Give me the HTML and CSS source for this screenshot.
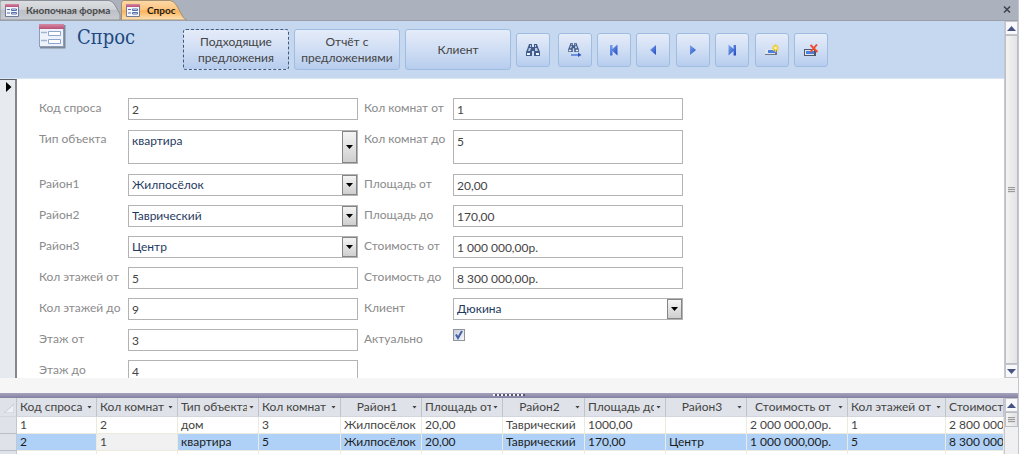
FILE: index.html
```html
<!DOCTYPE html>
<html lang="ru">
<head>
<meta charset="utf-8">
<title>Спрос</title>
<link rel="stylesheet" href="styles.css">
</head>
<body>
<svg class="defs" aria-hidden="true">
  <defs>
    <linearGradient id="blue" x1="0" y1="0" x2="1" y2="1"><stop offset="0" stop-color="#7fa8f0"/><stop offset="1" stop-color="#1f49c0"/></linearGradient>
    <linearGradient id="gray-tab" x1="0" y1="0" x2="0" y2="1"><stop offset="0" stop-color="#dcdee1"/><stop offset=".45" stop-color="#cfd2d6"/><stop offset=".5" stop-color="#bcc0c6"/><stop offset="1" stop-color="#c9ccd1"/></linearGradient>
    <linearGradient id="orange-tab" x1="0" y1="0" x2="0" y2="1"><stop offset="0" stop-color="#fbd9a8"/><stop offset=".45" stop-color="#fcc580"/><stop offset=".55" stop-color="#fbb45c"/><stop offset="1" stop-color="#fde3b8"/></linearGradient>
    <linearGradient id="rose" x1="0" y1="0" x2="0" y2="1"><stop offset="0" stop-color="#d58aa4"/><stop offset="1" stop-color="#b85077"/></linearGradient>
    <symbol id="form" viewBox="0 0 27 25">
      <path d="M1 1h25.5v23.5H1z" fill="#7f8898"/>
      <path d="M0 0h25v23H0z" fill="#8f9cb4"/>
      <path d="M1 5h23v17H1z" fill="#eef3fb"/>
      <path d="M0 0h25v5H0z" fill="url(#rose)"/>
      <path d="M2 8.500h6M2 16.500h6" stroke="#9fb3d4" stroke-width="1.500"/>
      <path d="M9.500 7.500h12v4h-12zM9.500 15.500h12v4h-12z" fill="#fff" stroke="#8ca6d0"/>
    </symbol>
    <symbol id="form-small" viewBox="0 0 14 13">
      <path d="M.5.500h13v12H.5z" fill="#f4f6fb" stroke="#6e7c9a"/>
      <path d="M0 0h14v3H0z" fill="url(#rose)"/>
      <path d="M2 5.500h3M2 9h3" stroke="#5471ac"/>
      <path d="M6.500 5h5v1.500h-5zM6.500 8.500h5V10h-5z" fill="#fff" stroke="#5471ac"/>
    </symbol>
    <symbol id="binoculars" viewBox="0 0 14 12">
      <path d="M3 0h3v3h2V0h3l1 3 2 5v4H8V7H6v5H0V8l2-5z" fill="#425c8a"/>
      <path d="M4 1h1v2H4zM9 1h1v2H9zM3 4h2L4 7H2zM9 4h2l1 3H9z" fill="#b9cbe8"/>
      <path d="M1 9h3v2H1zM10 9h3v2h-3z" fill="#eef3fa"/>
    </symbol>
  </defs>
</svg>

<div class="window">
  <nav class="tabs" aria-label="Открытые объекты">
    <button class="tab tab-first" type="button">
      <svg class="tab-shape" viewBox="0 0 121 20" preserveAspectRatio="none"><path d="M0 1.500Q1 .5 3 .5H108Q113 .5 116 7L120 14V20H0z" fill="url(#gray-tab)" stroke="#8b9098"/></svg>
      <svg class="tab-icon"><use href="#form-small"/></svg><span>Кнопочная форма</span>
    </button>
    <button class="tab tab-active" type="button">
      <svg class="tab-shape" viewBox="0 0 66 20" preserveAspectRatio="none"><path d="M.5 20V3Q.5.5 3 .5H49Q53 .5 56 6L62 17Q63 19 66 20z" fill="url(#orange-tab)" stroke="#a4906f"/></svg>
      <svg class="tab-icon"><use href="#form-small"/></svg><span>Спрос</span>
    </button>
    <button class="close" type="button" aria-label="Закрыть"><svg width="8" height="7" viewBox="0 0 8 7"><path d="M1 .5l6 6M7 .5l-6 6" stroke="#3f444c" stroke-width="1.500"/></svg></button>
  </nav>

  <main class="form-pane">
    <div class="form-view">
      <header class="form-header">
        <svg class="form-icon"><use href="#form"/></svg>
        <h1>Спрос</h1>
        <div class="commands">
          <button class="command focused" type="button">Подходящие<br>предложения</button>
          <button class="command" type="button">Отчёт с<br>предложениями</button>
          <button class="command" type="button">Клиент</button>
          <div class="find-group">
            <button class="icon-button" type="button" aria-label="Найти"><svg width="14" height="12"><use href="#binoculars"/></svg></button>
            <button class="icon-button" type="button" aria-label="Найти далее"><svg width="14" height="14" viewBox="0 0 14 14"><use href="#binoculars" width="11" height="9"/><path d="M3 12h8" stroke="#4f79d0" stroke-width="1.500"/><path d="M10 9.500l3.500 2.500-3.500 2z" fill="#2c56bd"/></svg></button>
          </div>
          <div class="nav-group">
            <button class="icon-button" type="button" aria-label="Первая запись"><svg width="10" height="12" viewBox="0 0 10 12"><path d="M1 1h2.500v4L8.500.500v11L3.500 7v4.500H1z" fill="url(#blue)"/></svg></button>
            <button class="icon-button" type="button" aria-label="Предыдущая запись"><svg width="8" height="12" viewBox="0 0 8 12"><path d="M7 1v10L1 6z" fill="url(#blue)"/></svg></button>
            <button class="icon-button" type="button" aria-label="Следующая запись"><svg width="8" height="12" viewBox="0 0 8 12"><path d="M1 1v10l6-5z" fill="url(#blue)"/></svg></button>
            <button class="icon-button" type="button" aria-label="Последняя запись"><svg width="10" height="12" viewBox="0 0 10 12"><path d="M9 1H6.500v4L1.500.500v11L6.500 7v4.500H9z" fill="url(#blue)"/></svg></button>
            <button class="icon-button" type="button" aria-label="Добавить запись"><svg width="16" height="12" viewBox="0 0 16 12"><path d="M1 5h12v6H1z" fill="#6d7787"/><path d="M1 5h10v5H1z" fill="#dfe5ee"/><path d="M4 6h8v3H4z" fill="#4c7ede"/><path d="M11.500 0v8M8 4h7M9 1.500l5 5M14 1.500l-5 5" stroke="#f2cf3d" stroke-width="1.500"/><path d="M10.500 3h2v2h-2z" fill="#fffbd0"/></svg></button>
            <button class="icon-button" type="button" aria-label="Удалить запись"><svg width="16" height="12" viewBox="0 0 16 12"><path d="M1 5h12v7H1z" fill="#4d5868"/><path d="M2 6h9v5H2z" fill="#dfe5ee"/><path d="M3 7h8v3H3z" fill="#4c7ede"/><path d="M7.500 1l7 7M14 .5L7.500 8" stroke="#f0492c" stroke-width="1.800"/></svg></button>
          </div>
        </div>
      </header>

      <div class="record">
        <button class="record-selector" type="button" aria-label="Текущая запись"><svg width="6" height="10" viewBox="0 0 6 10"><path d="M0 0l5.500 5L0 10z" fill="#000"/></svg></button>
        <form class="fields">
          <label for="code">Код спроса</label>
          <input id="code" class="box" type="text" value="2">
          <label for="rooms-from">Кол комнат от</label>
          <input id="rooms-from" class="box" type="text" value="1">

          <label for="type">Тип объекта</label>
          <div class="combo tall"><select id="type"><option>квартира</option></select><span class="drop"></span></div>
          <label for="rooms-to">Кол комнат до</label>
          <input id="rooms-to" class="box tall" type="text" value="5">

          <label for="area1">Район1</label>
          <div class="combo"><select id="area1"><option>Жилпосёлок</option></select><span class="drop"></span></div>
          <label for="size-from">Площадь от</label>
          <input id="size-from" class="box" type="text" value="20,00">

          <label for="area2">Район2</label>
          <div class="combo"><select id="area2"><option>Таврический</option></select><span class="drop"></span></div>
          <label for="size-to">Площадь до</label>
          <input id="size-to" class="box" type="text" value="170,00">

          <label for="area3">Район3</label>
          <div class="combo"><select id="area3"><option>Центр</option></select><span class="drop"></span></div>
          <label for="price-from">Стоимость от</label>
          <input id="price-from" class="box" type="text" value="1 000 000,00р.">

          <label for="floors-from">Кол этажей от</label>
          <input id="floors-from" class="box" type="text" value="5">
          <label for="price-to">Стоимость до</label>
          <input id="price-to" class="box" type="text" value="8 300 000,00р.">

          <label for="floors-to">Кол этажей до</label>
          <input id="floors-to" class="box" type="text" value="9">
          <label for="client">Клиент</label>
          <div class="combo"><select id="client"><option>Дюкина</option></select><span class="drop"></span></div>

          <label for="floor-from">Этаж от</label>
          <input id="floor-from" class="box" type="text" value="3">
          <label for="actual">Актуально</label>
          <div class="check"><input id="actual" type="checkbox" checked><svg viewBox="0 0 12 12"><path d="M3 5.500l2 3.500 4-7" fill="none" stroke="#4560a8" stroke-width="2"/></svg></div>

          <label for="floor-to">Этаж до</label>
          <input id="floor-to" class="box" type="text" value="4">
        </form>
      </div>
    </div>
    <div class="scrollbar">
      <button type="button" class="scroll-button" aria-label="Вверх"><svg width="9" height="5" viewBox="0 0 9 5"><path d="M0 5l4.500-5L9 5z" fill="#475383"/></svg></button>
      <div class="thumb"><span class="grip"></span></div>
      <button type="button" class="scroll-button" aria-label="Вниз"><svg width="9" height="5" viewBox="0 0 9 5"><path d="M0 0l4.500 5L9 0z" fill="#475383"/></svg></button>
    </div>
  </main>

  <div class="gap"></div>
  <div class="splitter"><span class="splitter-grip"></span></div>

  <section class="sheet-pane">
    <div class="sheet-view">
      <table class="sheet">
        <colgroup><col class="c-select"><col class="c-code"><col class="c-std"><col class="c-std"><col class="c-wide"><col class="c-std"><col class="c-std"><col class="c-wide"><col class="c-std"><col class="c-std"><col class="c-price"><col class="c-floors"><col></colgroup>
        <thead>
          <tr>
            <th class="corner"><svg width="10" height="9" viewBox="0 0 10 9"><path d="M10 0v9H0z" fill="#eef1f6" stroke="#c5cbd5"/></svg></th>
            <th><div class="head"><span>Код спроса</span><i></i></div></th>
            <th><div class="head"><span>Кол комнат</span><i></i></div></th>
            <th><div class="head"><span>Тип объекта</span><i></i></div></th>
            <th><div class="head"><span>Кол комнат</span><i></i></div></th>
            <th><div class="head middle"><span>Район1</span><i></i></div></th>
            <th><div class="head"><span>Площадь от</span><i></i></div></th>
            <th><div class="head middle"><span>Район2</span><i></i></div></th>
            <th><div class="head"><span>Площадь до</span><i></i></div></th>
            <th><div class="head middle"><span>Район3</span><i></i></div></th>
            <th><div class="head middle"><span>Стоимость от</span><i></i></div></th>
            <th><div class="head"><span>Кол этажей от</span><i></i></div></th>
            <th><div class="head last"><span>Стоимость до</span></div></th>
          </tr>
        </thead>
        <tbody>
          <tr><th></th><td>1</td><td>2</td><td>дом</td><td>3</td><td>Жилпосёлок</td><td>20,00</td><td>Таврический</td><td>1000,00</td><td></td><td>2 000 000,00р.</td><td>1</td><td>2 800 000,00р.</td></tr>
          <tr class="selected"><th></th><td>2</td><td class="current">1</td><td>квартира</td><td>5</td><td>Жилпосёлок</td><td>20,00</td><td>Таврический</td><td>170,00</td><td>Центр</td><td>1 000 000,00р.</td><td>5</td><td>8 300 000,00р.</td></tr>
          <tr><th></th><td></td><td></td><td></td><td></td><td></td><td></td><td></td><td></td><td></td><td></td><td></td><td></td></tr>
        </tbody>
      </table>
    </div>
    <div class="scrollbar">
      <button type="button" class="scroll-button" aria-label="Вверх"><svg width="9" height="5" viewBox="0 0 9 5"><path d="M0 5l4.500-5L9 5z" fill="#475383"/></svg></button>
      <div class="thumb short"><span class="grip"></span></div>
    </div>
  </section>
</div>
</body>
</html>
```
FILE: styles.css
```css
* { box-sizing: border-box; }

body {
  margin: 0;
  background: #fff;
  font: 12px/16px Lato, "Noto Sans", sans-serif;
  color: #444;
  overflow: hidden;
}

button, input, select { font: inherit; color: inherit; margin: 0; }
button { padding: 0; border: 0; background: none; }
svg { display: block; flex: none; }
.defs { position: absolute; width: 0; height: 0; }

.window {
  display: flex;
  flex-direction: column;
  height: 100vh;
  margin-right: 5px;
  border-right: 1px solid #c3c5cf;
}

/* Tabs */
.tabs {
  display: flex;
  align-items: flex-end;
  height: 21px;
  flex: none;
  background: #abb2bd;
  border-bottom: 1px solid #9a9fa8;
}
.tab {
  position: relative;
  display: flex;
  align-items: center;
  gap: 7px;
  height: 20px;
  padding: 0 8px 0 5px;
  font-size: 10px;
  font-weight: 700;
  color: #4a4a4a;
}
.tab-first { width: 121px; }
.tab-active { width: 66px; color: #1f1a12; }
.tab-shape { position: absolute; inset: 0; width: 100%; height: 100%; }
.tab-icon { position: relative; width: 14px; height: 13px; }
.tab span { position: relative; white-space: nowrap; }
.close { margin: 0 7px 7px auto; }

/* Form */
.form-pane { display: flex; height: 357px; flex: none; }
.form-view { flex: 1; min-width: 0; display: flex; flex-direction: column; }
.form-header {
  display: flex;
  align-items: flex-start;
  height: 58px;
  flex: none;
  padding-left: 39px;
  background: #c6d8f0;
  border-bottom: 1px solid #dbe6f5;
}
.form-icon { width: 27px; height: 25px; margin-top: 3px; }
h1 {
  width: 106px;
  margin: 4px 0 0 11px;
  font: 20px/24px "DejaVu Serif Condensed", "Liberation Serif", serif;
  color: #1f497d;
}
.commands { display: flex; align-items: center; gap: 5px; margin-top: 8px; }
.command {
  width: 106px;
  height: 41px;
  border: 1px solid #9fbde0;
  border-radius: 3px;
  background: linear-gradient(#e5ecf9, #d0def4 50%, #b7cdee);
  white-space: nowrap;
}
.focused { border: 1px dashed #42587e; }
.find-group { display: flex; gap: 8px; }
.nav-group { display: flex; justify-content: space-between; width: 231px; }
.icon-button {
  display: flex;
  align-items: center;
  justify-content: center;
  width: 34px;
  height: 34px;
  border: 1px solid #9fbde0;
  border-radius: 3px;
  background: linear-gradient(#e5ecf9, #d0def4 50%, #b7cdee);
}

.record { display: flex; flex: 1; min-height: 0; overflow: hidden; }
.record-selector {
  display: flex;
  align-items: flex-start;
  justify-content: flex-end;
  width: 17px;
  flex: none;
  padding: 2px 3px;
  background: #e7ebf0;
  border-top: 1px solid #5c6066;
  border-right: 2px solid #83878d;
}
.fields {
  display: grid;
  grid-template-columns: 83px minmax(0, 230px) 83px minmax(0, 230px);
  grid-template-rows: 22px 36px repeat(7, 22px);
  column-gap: 6px;
  row-gap: 9px;
  flex: 1;
  padding: 19px 22px 0;
  align-items: center;
}
.fields label { align-self: start; line-height: 20px; color: #8b8b8b; white-space: nowrap; }
.box, .combo { width: 100%; height: 22px; border: 1px solid #b3b3b3; background: #fff; }
.box { padding: 0 3px; border-radius: 0; }
.combo { position: relative; color: #1f3a5f; }
.combo select {
  display: block;
  width: 100%;
  height: 100%;
  padding: 0 18px 0 3px;
  border: 0;
  background: none;
  appearance: none;
}
.tall { height: 34px; }
.box.tall, .tall select { padding-bottom: 12px; }
.drop {
  position: absolute;
  inset: 0 0 0 auto;
  width: 15px;
  border: 1px solid #858585;
  background: linear-gradient(#f4f4f4, #cfcfcf);
  pointer-events: none;
}
.drop::after {
  content: "";
  position: absolute;
  inset: 0;
  width: 7px;
  height: 4px;
  margin: auto;
  background: #000;
  clip-path: polygon(0 0, 100% 0, 50% 100%);
}
.check { position: relative; align-self: start; width: 12px; height: 12px; }
.check input {
  display: block;
  width: 12px;
  height: 12px;
  border: 1px solid #8f949c;
  background: linear-gradient(135deg, #c8ced8, #f4f6f9);
  appearance: none;
}
.check svg { position: absolute; inset: 0; pointer-events: none; }

/* Scroll bars */
.scrollbar { display: flex; flex-direction: column; width: 14px; flex: none; background: #f0f0f2; border-left: 1px solid #c5c8d0; }
.scroll-button { display: flex; align-items: center; justify-content: center; height: 14px; border: 1px solid #c3c5cb; background: #f8f8fa; }
.thumb { display: flex; align-items: center; justify-content: center; flex: 1; border: 1px solid #bcbec5; background: linear-gradient(90deg, #f3f3f3, #e4e4e6); }
.form-pane .thumb { padding-bottom: 20px; }
.short { flex: none; height: 15px; }
.grip { width: 7px; height: 6px; background: repeating-linear-gradient(#9c9c9c 0 1px, #dedede 1px 2px); }

.gap { height: 15px; flex: none; background: #f6f6f6; }
.splitter { display: flex; justify-content: center; height: 5px; flex: none; background: linear-gradient(#a5a4bd, #8380a3); }
.splitter-grip { width: 32px; height: 2px; margin-top: 1px; background: repeating-linear-gradient(90deg, #f4f4f8 0 2px, #55546e 2px 4px); }

/* Datasheet */
.sheet-pane { display: flex; flex: 1; min-height: 0; }
.sheet-view { flex: 1; min-width: 0; overflow: hidden; }
.sheet { width: 100%; table-layout: fixed; border-collapse: separate; border-spacing: 0; }
.c-select { width: 17px; }
.c-code { width: 80px; }
.c-std { width: 81px; }
.c-wide { width: 82px; }
.c-price { width: 101px; }
.c-floors { width: 98px; }
.sheet th, .sheet td {
  height: 17px;
  padding: 0 0 0 3px;
  font-weight: 400;
  text-align: left;
  white-space: nowrap;
  overflow: hidden;
  line-height: 16px;
}
.sheet thead th { height: 19px; background: #dfe2e8; border-right: 1px solid #bfc3cb; border-bottom: 1px solid #d3d6dc; }
.sheet tbody th { background: #dfe2e8; border-right: 1px solid #c3c7cf; border-bottom: 1px solid #b9bdc6; }
.sheet td { border-right: 1px solid #ece9dd; border-bottom: 1px solid #ece9dd; }
.sheet .corner svg { margin: 3px 0 0 1px; }
.head { display: flex; align-items: center; gap: 1px; padding-right: 3px; }
.head span { flex: 1; overflow: hidden; }
.head.last { padding-right: 0; }
.middle span { text-align: center; }
.head i {
  width: 5px;
  height: 3px;
  margin: 0 1px;
  flex: none;
  background: #444;
  clip-path: polygon(0 0, 100% 0, 50% 100%);
}
.sheet .selected td { background: #afd1f7; color: #1c1c1c; }
.sheet .selected .current { background: #f1f1f1; color: #444; }
```
